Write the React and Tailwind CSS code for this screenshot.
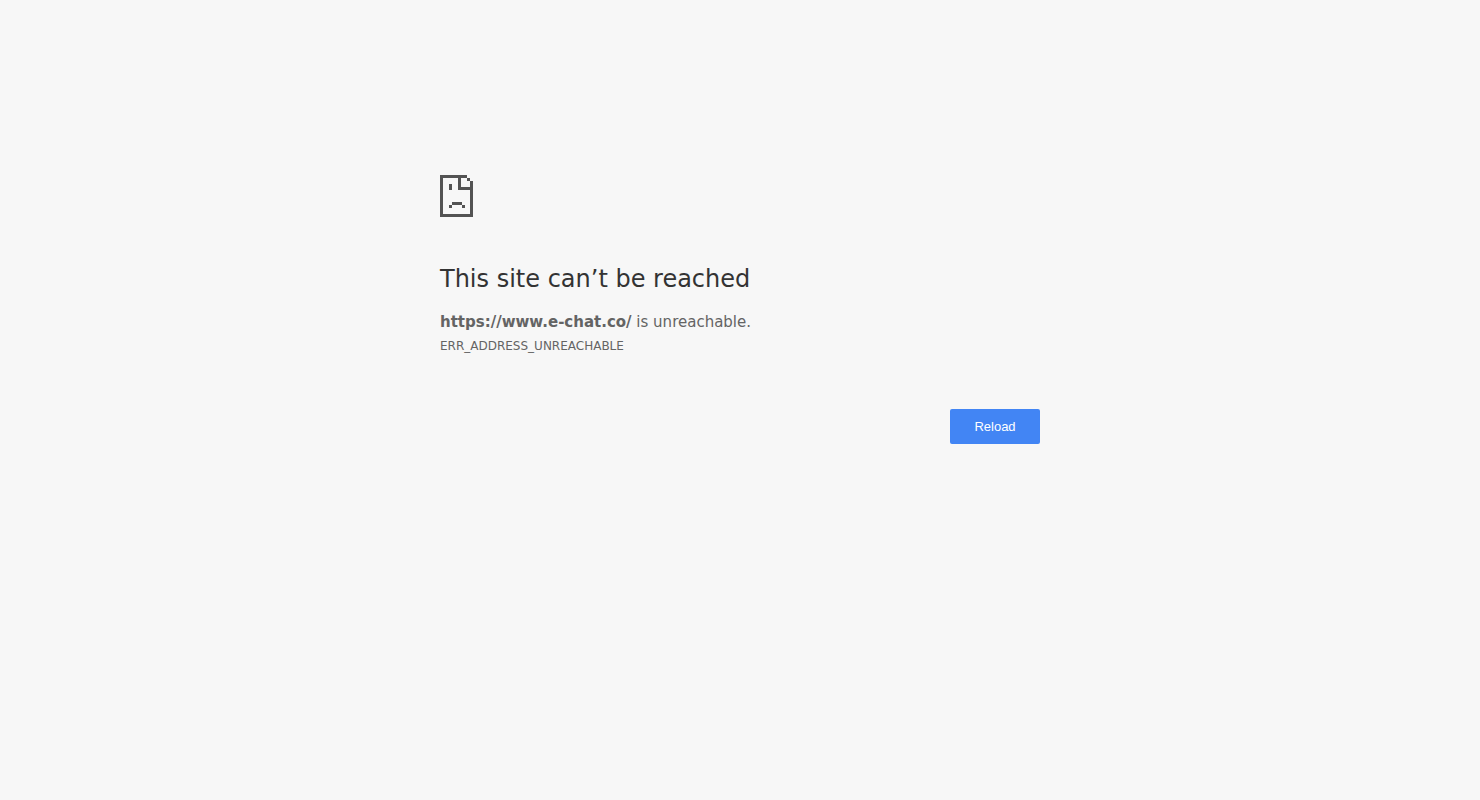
import React from 'react';

function SadPageIcon() {
  return (
    <svg
      width="33"
      height="42"
      viewBox="0 0 33 42"
      fill="#535353"
      shapeRendering="crispEdges"
      aria-hidden="true"
    >
      {/* Page outline */}
      <path d="M0 0h27v3H3v36h27V6h3v36H0z" />
      {/* Folded corner */}
      <path d="M18 3h3v9h9v3H18z" />
      <path d="M27 3h3v3h-3z" />
      {/* Face */}
      <path d="M9 9h3v6H9z" />
      <path d="M12 27h10v3H12zM9 30h3v3H9zM22 30h3v3h-3z" />
    </svg>
  );
}

function App() {
  const url = 'https://www.e-chat.co/';

  const handleReload = () => {
    window.location.reload();
  };

  return (
    <div className="min-h-screen bg-[#f7f7f7] px-6 pt-[175px] font-['DejaVu_Sans',sans-serif] text-[#646464]">
      <main className="mx-auto w-full max-w-[600px]">
        <SadPageIcon />

        <h1 className="mt-12 text-2xl leading-7 text-[#333]">This site can’t be reached</h1>
        <p className="mt-[17px] text-[15px] leading-6">
          <strong className="font-bold">{url}</strong> is unreachable.
        </p>
        <p className="text-xs leading-6">ERR_ADDRESS_UNREACHABLE</p>

        <div className="mt-[51px] flex justify-end">
          <button
            type="button"
            onClick={handleReload}
            className="h-[35px] min-w-[90px] cursor-pointer rounded-xs bg-[#4285f4] px-6 font-['Liberation_Sans',sans-serif] text-[13px] text-white hover:bg-[#3b78e7]"
          >
            Reload
          </button>
        </div>
      </main>
    </div>
  );
}

export default App;
